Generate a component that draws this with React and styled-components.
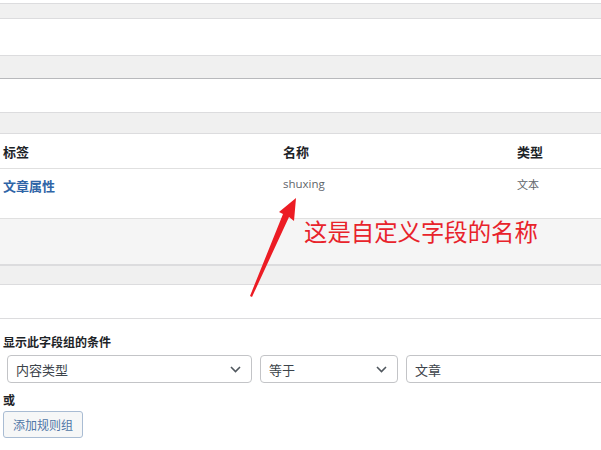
import styled, { createGlobalStyle } from "styled-components";

const Global = createGlobalStyle`
  html, body {
    margin: 0;
    padding: 0;
    background: #ffffff;
  }
  body {
    font-family: "Noto Sans CJK SC", "Noto Sans", sans-serif;
    color: #1d2327;
    overflow: hidden;
  }
`;

const Page = styled.div`
  position: relative;
  width: 601px;
  height: 450px;
  padding-top: 3px;
  box-sizing: border-box;
`;

const Band = styled.div`
  height: ${(p) => p.h}px;
  background: #f0f0f0;
  border-top: 1px solid #dcdcde;
  border-bottom: 1px solid ${(p) => (p.dark ? "#b8b9bc" : "#dcdcde")};
`;

const Blank = styled.div`
  height: ${(p) => p.h}px;
  background: ${(p) => p.bg || "#ffffff"};
  border-bottom: ${(p) => (p.line ? "1px solid #dcdcde" : "none")};
`;

const Row = styled.div`
  display: grid;
  grid-template-columns: 280px 234px 1fr;
  padding-left: 3px;
  height: ${(p) => p.h}px;
  align-items: ${(p) => (p.top ? "start" : "center")};
  padding-top: ${(p) => p.pt || 0}px;
  box-sizing: border-box;
  border-bottom: 1px solid #e0e0e0;
`;

const Head = styled.span`
  font-size: 13px;
  font-weight: 700;
  color: #1d2327;
`;

const LabelLink = styled.span`
  font-size: 13px;
  font-weight: 700;
  color: #2f65a7;
`;

const Cell = styled.span`
  font-family: "Open Sans", "Noto Sans CJK SC", sans-serif;
  font-size: ${(p) => p.size || 11.5}px;
  color: #5f656b;
`;

const Conditions = styled.div`
  padding: 14px 0 0 3px;
`;

const Title = styled.div`
  font-size: 12px;
  font-weight: 700;
  color: #1d2327;
  line-height: 18px;
  margin-bottom: 4px;
`;

const Fields = styled.div`
  display: flex;
  gap: 8px;
  padding-left: 4px;
`;

const Select = styled.div`
  width: ${(p) => p.w}px;
  flex: ${(p) => (p.grow ? "1 0 auto" : "none")};
  height: 28px;
  box-sizing: border-box;
  border: 1px solid #c3c4c7;
  border-radius: 4px;
  display: flex;
  align-items: center;
  justify-content: space-between;
  padding: 0 10px 0 8px;
  font-size: 13px;
  color: #3c434a;
  background: #fff;
  margin-right: ${(p) => (p.grow ? "-20px" : "0")};
`;

const Or = styled.div`
  font-size: 12px;
  font-weight: 700;
  margin-top: 9px;
  line-height: 16px;
`;

const Button = styled.button`
  margin-top: 3px;
  height: 27px;
  padding: 0 9px;
  border: 1px solid #a9bcd3;
  border-radius: 3px;
  background: #f6f7f7;
  color: #4f76a6;
  font-family: "Noto Sans CJK SC", sans-serif;
  font-size: 12px;
`;

const Note = styled.div`
  position: absolute;
  left: 304px;
  top: 215px;
  font-size: 23.4px;
  line-height: 32px;
  color: #e8232b;
`;

const Arrow = styled.svg`
  position: absolute;
  left: 0;
  top: 0;
  pointer-events: none;
`;

const Chevron = () => (
  <svg width="11" height="7" viewBox="0 0 11 7">
    <path d="M1 1l4.5 4.5L10 1" fill="none" stroke="#50575e" strokeWidth="1.6" />
  </svg>
);

export default function App() {
  return (
    <Page>
      <Global />
      <Band h={14} />
      <Blank h={36} />
      <Band h={22} dark />
      <Blank h={33} />
      <Band h={20} />
      <Row h={35}>
        <Head>标签</Head>
        <Head>名称</Head>
        <Head>类型</Head>
      </Row>
      <Row h={50} top pt={7}>
        <LabelLink>文章属性</LabelLink>
        <Cell>shuxing</Cell>
        <Cell size={11}>文本</Cell>
      </Row>
      <Blank h={45} bg="#f5f5f5" line />
      <Band h={18} />
      <Blank h={33} line />
      <Conditions>
        <Title>显示此字段组的条件</Title>
        <Fields>
          <Select w={245}>
            内容类型
            <Chevron />
          </Select>
          <Select w={138}>
            等于
            <Chevron />
          </Select>
          <Select w={215} grow>
            文章
          </Select>
        </Fields>
        <Or>或</Or>
        <Button>添加规则组</Button>
      </Conditions>
      <Note>这是自定义字段的名称</Note>
      <Arrow width="601" height="450" viewBox="0 0 601 450">
        <polygon points="250,296 283,214 279,212 296,198 294,221 289,217 252,297" fill="#ec1c24" />
      </Arrow>
    </Page>
  );
}
